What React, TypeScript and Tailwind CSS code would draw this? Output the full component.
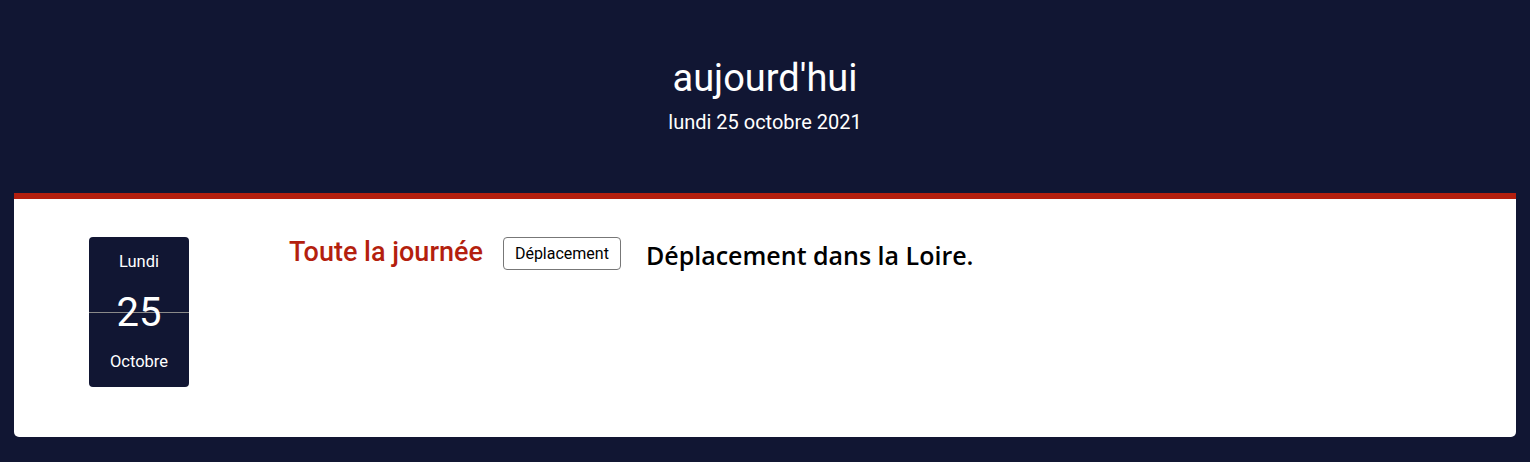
export default function App() {
  return (
    <div className="min-h-[462px] bg-[#111633] pb-[25px] font-['Roboto',sans-serif]">
      <header className="flex h-[193px] flex-col items-center pt-[54px] text-white">
        <h1 className="text-[38px] leading-[48px]">aujourd'hui</h1>
        <p className="mt-[8px] text-[20px] leading-[24px]">lundi 25 octobre 2021</p>
      </header>

      <div className="mx-[14px] h-[244px] rounded-b-[5px] border-t-[6px] border-[#b41f0e] bg-white">
        <div className="flex pl-[75px] pt-[38px]">
          <DateBox />
          <div className="ml-[100px] flex items-start gap-[20px]">
            <span className="text-[27px] font-medium leading-[31px] text-[#b41f0e]">Toute la journée</span>
            <span className="rounded-[4px] border border-[#777] px-[11px] text-[16px] leading-[31px] text-black">
              Déplacement
            </span>
            <span className="ml-[5px] font-['Open_Sans',sans-serif] text-[25px] font-semibold leading-[36px] text-black">
              Déplacement dans la Loire.
            </span>
          </div>
        </div>
      </div>
    </div>
  );
}

function DateBox() {
  return (
    <div className="relative flex h-[150px] w-[100px] flex-col items-center rounded-[4px] bg-[#111633] text-white">
      <div className="absolute left-0 right-0 top-[75px] h-px bg-[#8a8a8a]" />
      <span className="mt-[15px] text-[16.5px] leading-[20px]">Lundi</span>
      <span className="relative mt-[17px] text-[40px] leading-[48px]">25</span>
      <span className="mt-[15px] text-[16.5px] leading-[20px]">Octobre</span>
    </div>
  );
}
